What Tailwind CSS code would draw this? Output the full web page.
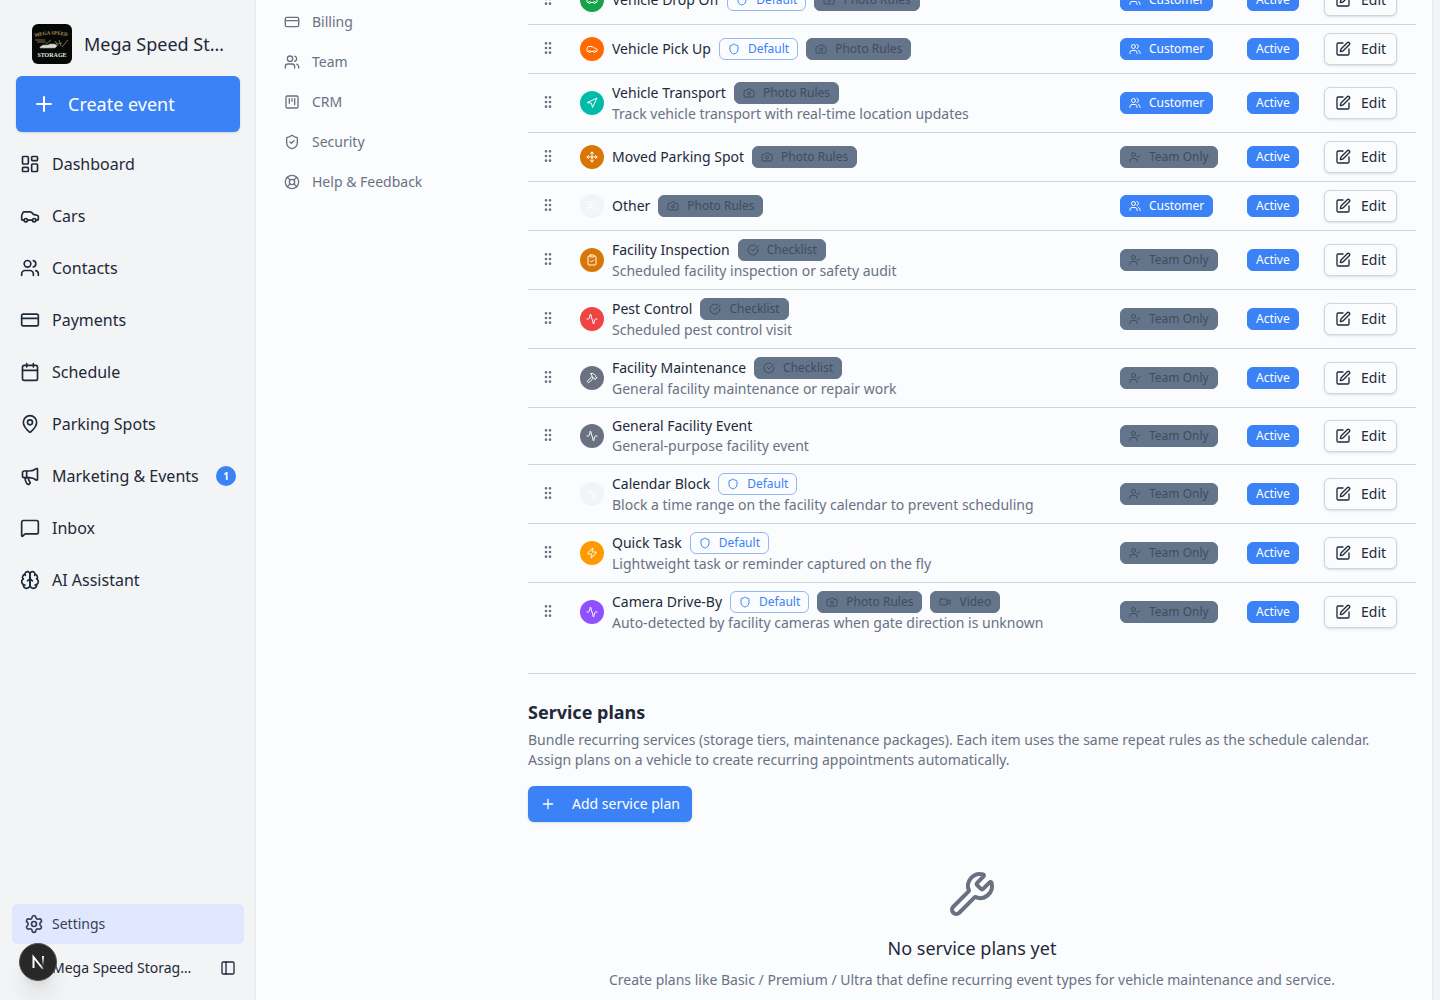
<!DOCTYPE html>
<html lang="en">
<head>
  <meta charset="UTF-8">
  <meta name="viewport" content="width=device-width, initial-scale=1.0">
  <title>Settings - Mega Speed Storage</title>
  <script src="https://cdn.jsdelivr.net/npm/@tailwindcss/browser@4"></script>
</head>
<body class="flex h-screen overflow-hidden bg-[#f3f4f6] font-['Noto_Sans',sans-serif] text-gray-800">

  <!-- Icon sprite -->
  <svg class="hidden">
    <symbol id="plus" viewBox="0 0 24 24"><path d="M5 12h14M12 5v14"/></symbol>
    <symbol id="dashboard" viewBox="0 0 24 24"><rect width="7" height="9" x="3" y="3" rx="1"/><rect width="7" height="5" x="14" y="3" rx="1"/><rect width="7" height="9" x="14" y="12" rx="1"/><rect width="7" height="5" x="3" y="16" rx="1"/></symbol>
    <symbol id="car" viewBox="0 0 24 24"><path d="M19 17h2c.6 0 1-.4 1-1v-3c0-.9-.7-1.7-1.5-1.9C18.7 10.6 16 10 16 10s-1.3-1.4-2.2-2.3c-.5-.4-1.1-.7-1.8-.7H5c-.6 0-1.1.4-1.4.9l-1.4 2.9A3.7 3.7 0 0 0 2 12v4c0 .6.4 1 1 1h2"/><circle cx="7" cy="17" r="2"/><path d="M9 17h6"/><circle cx="17" cy="17" r="2"/></symbol>
    <symbol id="users" viewBox="0 0 24 24"><path d="M16 21v-2a4 4 0 0 0-4-4H6a4 4 0 0 0-4 4v2"/><circle cx="9" cy="7" r="4"/><path d="M22 21v-2a4 4 0 0 0-3-3.87M16 3.13a4 4 0 0 1 0 7.75"/></symbol>
    <symbol id="user-check" viewBox="0 0 24 24"><path d="m16 11 2 2 4-4"/><path d="M16 21v-2a4 4 0 0 0-4-4H6a4 4 0 0 0-4 4v2"/><circle cx="9" cy="7" r="4"/></symbol>
    <symbol id="card" viewBox="0 0 24 24"><rect width="20" height="14" x="2" y="5" rx="2"/><path d="M2 10h20"/></symbol>
    <symbol id="calendar" viewBox="0 0 24 24"><path d="M8 2v4M16 2v4"/><rect width="18" height="18" x="3" y="4" rx="2"/><path d="M3 10h18"/></symbol>
    <symbol id="pin" viewBox="0 0 24 24"><path d="M20 10c0 4.993-5.539 10.193-7.399 11.799a1 1 0 0 1-1.202 0C9.539 20.193 4 14.993 4 10a8 8 0 0 1 16 0"/><circle cx="12" cy="10" r="3"/></symbol>
    <symbol id="megaphone" viewBox="0 0 24 24"><path d="M11 6a13 13 0 0 0 8.4-2.8A1 1 0 0 1 21 4v12a1 1 0 0 1-1.6.8A13 13 0 0 0 11 14H5a2 2 0 0 1-2-2V8a2 2 0 0 1 2-2z"/><path d="M6 14a12 12 0 0 0 2.4 7.2 2 2 0 0 0 3.2-2.4A8 8 0 0 1 10 14M8 6v8"/></symbol>
    <symbol id="message" viewBox="0 0 24 24"><path d="M22 17a2 2 0 0 1-2 2H6.828a2 2 0 0 0-1.414.586l-2.202 2.202A.71.71 0 0 1 2 21.286V5a2 2 0 0 1 2-2h16a2 2 0 0 1 2 2z"/></symbol>
    <symbol id="brain" viewBox="0 0 24 24"><path d="M12 5a3 3 0 1 0-5.997.125 4 4 0 0 0-2.526 5.77 4 4 0 0 0 .556 6.588A4 4 0 1 0 12 18Z"/><path d="M12 5a3 3 0 1 1 5.997.125 4 4 0 0 1 2.526 5.77 4 4 0 0 1-.556 6.588A4 4 0 1 1 12 18Z"/><path d="M15 13a4.5 4.5 0 0 1-3-4 4.5 4.5 0 0 1-3 4M17.599 6.5a3 3 0 0 0 .399-1.375M6.003 5.125A3 3 0 0 0 6.401 6.5M3.477 10.896a4 4 0 0 1 .585-.396M19.938 10.5a4 4 0 0 1 .585.396M6 18a4 4 0 0 1-1.967-.516M19.967 17.484A4 4 0 0 1 18 18"/></symbol>
    <symbol id="settings" viewBox="0 0 24 24"><path d="M9.671 4.136a2.34 2.34 0 0 1 4.659 0 2.34 2.34 0 0 0 3.319 1.915 2.34 2.34 0 0 1 2.33 4.033 2.34 2.34 0 0 0 0 3.831 2.34 2.34 0 0 1-2.33 4.033 2.34 2.34 0 0 0-3.319 1.915 2.34 2.34 0 0 1-4.659 0 2.34 2.34 0 0 0-3.32-1.915 2.34 2.34 0 0 1-2.33-4.033 2.34 2.34 0 0 0 0-3.831A2.34 2.34 0 0 1 6.35 6.051a2.34 2.34 0 0 0 3.319-1.915"/><circle cx="12" cy="12" r="3"/></symbol>
    <symbol id="panel" viewBox="0 0 24 24"><rect width="18" height="18" x="3" y="3" rx="2"/><path d="M9 3v18"/></symbol>
    <symbol id="kanban" viewBox="0 0 24 24"><rect width="18" height="18" x="3" y="3" rx="2"/><path d="M8 7v7M12 7v4M16 7v9"/></symbol>
    <symbol id="shield" viewBox="0 0 24 24"><path d="M20 13c0 5-3.5 7.5-7.66 8.95a1 1 0 0 1-.67-.01C7.5 20.5 4 18 4 13V6a1 1 0 0 1 1-1c2 0 4.5-1.2 6.24-2.72a1.17 1.17 0 0 1 1.52 0C14.51 3.81 17 5 19 5a1 1 0 0 1 1 1z"/></symbol>
    <symbol id="shield-check" viewBox="0 0 24 24"><path d="M20 13c0 5-3.5 7.5-7.66 8.95a1 1 0 0 1-.67-.01C7.5 20.5 4 18 4 13V6a1 1 0 0 1 1-1c2 0 4.5-1.2 6.24-2.72a1.17 1.17 0 0 1 1.52 0C14.51 3.81 17 5 19 5a1 1 0 0 1 1 1z"/><path d="m9 12 2 2 4-4"/></symbol>
    <symbol id="life-buoy" viewBox="0 0 24 24"><circle cx="12" cy="12" r="10"/><path d="m4.93 4.93 4.24 4.24M14.83 9.17l4.24-4.24M14.83 14.83l4.24 4.24M9.17 14.83l-4.24 4.24"/><circle cx="12" cy="12" r="4"/></symbol>
    <symbol id="camera" viewBox="0 0 24 24"><path d="M14.5 4h-5L7 7H4a2 2 0 0 0-2 2v9a2 2 0 0 0 2 2h16a2 2 0 0 0 2-2V9a2 2 0 0 0-2-2h-3z"/><circle cx="12" cy="13" r="3"/></symbol>
    <symbol id="check" viewBox="0 0 24 24"><path d="M21.801 10A10 10 0 1 1 17 3.335"/><path d="m9 11 3 3L22 4"/></symbol>
    <symbol id="video" viewBox="0 0 24 24"><path d="m16 13 5.223 3.482a.5.5 0 0 0 .777-.416V7.87a.5.5 0 0 0-.752-.432L16 10.5"/><rect x="2" y="6" width="14" height="12" rx="2"/></symbol>
    <symbol id="navigation" viewBox="0 0 24 24"><path d="m3 11 19-9-9 19-2-8z"/></symbol>
    <symbol id="move" viewBox="0 0 24 24"><path d="M12 2v20M2 12h20M15 19l-3 3-3-3M19 9l3 3-3 3M5 9l-3 3 3 3M9 5l3-3 3 3"/></symbol>
    <symbol id="clipboard" viewBox="0 0 24 24"><rect width="8" height="4" x="8" y="2" rx="1"/><path d="M16 4h2a2 2 0 0 1 2 2v14a2 2 0 0 1-2 2H6a2 2 0 0 1-2-2V6a2 2 0 0 1 2-2h2"/><path d="m9 14 2 2 4-4"/></symbol>
    <symbol id="activity" viewBox="0 0 24 24"><path d="M22 12h-2.48a2 2 0 0 0-1.93 1.46l-2.35 8.36a.25.25 0 0 1-.48 0L9.24 2.18a.25.25 0 0 0-.48 0l-2.35 8.36A2 2 0 0 1 4.49 12H2"/></symbol>
    <symbol id="hammer" viewBox="0 0 24 24"><path d="m15 12-8.373 8.373a1 1 0 1 1-3-3L12 9M18 15l4-4"/><path d="m21.5 11.5-1.914-1.914A2 2 0 0 1 19 8.172V7l-2.26-2.26a6 6 0 0 0-4.202-1.756L9 2.96l.92.82A6.18 6.18 0 0 1 12 8.4V10l2 2h1.172a2 2 0 0 1 1.414.586L18.5 14.5"/></symbol>
    <symbol id="zap" viewBox="0 0 24 24"><path d="M4 14a1 1 0 0 1-.78-1.63l9.9-10.2a.5.5 0 0 1 .86.46l-1.92 6.02A1 1 0 0 0 13 10h7a1 1 0 0 1 .78 1.63l-9.9 10.2a.5.5 0 0 1-.86-.46l1.92-6.02A1 1 0 0 0 11 14z"/></symbol>
    <symbol id="edit" viewBox="0 0 24 24"><path d="M12 3H5a2 2 0 0 0-2 2v14a2 2 0 0 0 2 2h14a2 2 0 0 0 2-2v-7"/><path d="M18.375 2.625a1 1 0 0 1 3 3l-9.013 9.014a2 2 0 0 1-.853.505l-2.873.84a.5.5 0 0 1-.62-.62l.84-2.873a2 2 0 0 1 .506-.852z"/></symbol>
    <symbol id="grip" viewBox="0 0 24 24"><circle cx="9" cy="5" r="1"/><circle cx="9" cy="12" r="1"/><circle cx="9" cy="19" r="1"/><circle cx="15" cy="5" r="1"/><circle cx="15" cy="12" r="1"/><circle cx="15" cy="19" r="1"/></symbol>
    <symbol id="wrench" viewBox="0 0 24 24"><path d="M14.7 6.3a1 1 0 0 0 0 1.4l1.6 1.6a1 1 0 0 0 1.4 0l3.106-3.105c.32-.322.863-.22.983.218a6 6 0 0 1-8.259 7.057l-7.91 7.91a1 1 0 0 1-2.999-3l7.91-7.91a6 6 0 0 1 7.057-8.259c.438.12.54.662.219.984z"/></symbol>
  </svg>

  <!-- Sidebar -->
  <aside class="flex w-64 shrink-0 flex-col">
    <div class="flex items-center gap-3 px-8 pt-6 pb-3">
      <svg class="size-10 shrink-0 rounded-md" viewBox="0 0 40 40" role="img" aria-label="Mega Speed Storage logo">
        <rect width="40" height="40" fill="#060806"/>
        <path id="logo-arc" d="M3 13Q20 8 39 13" fill="none"/>
        <text font-family="Liberation Serif" font-weight="bold" font-size="5" fill="#b3955c"><textPath href="#logo-arc">MEGA SPEED</textPath></text>
        <path d="M3 16h10M5 18h9M14 20l5-4M23 17l3 5M27 16l2 6M36 16l-6 7" stroke="#7d6b48" stroke-width="1" fill="none"/>
        <path d="M8 23l3-2h5l2-1h5l2 2-2 2H8zM24 20l6-1" fill="#d8d8d2" stroke="#9a9a90" stroke-width=".6"/>
        <text x="20" y="33" text-anchor="middle" font-family="Liberation Serif" font-weight="bold" font-size="6" fill="#e5e7e2">STORAGE</text>
      </svg>
      <span class="truncate text-lg">Mega Speed Storage</span>
    </div>
    <div class="px-4">
      <button class="flex h-14 w-full items-center gap-3 rounded-md bg-[#3b82f6] px-4 text-lg text-white shadow-sm">
        <svg class="size-6 fill-none stroke-current stroke-2" stroke-linecap="round"><use href="#plus"/></svg>
        Create event
      </button>
    </div>
    <nav id="mainNav" class="flex flex-col gap-1 px-3 pt-2"></nav>

    <div class="mt-auto flex flex-col gap-1 px-3 pb-3">
      <a href="#" class="flex h-10 items-center gap-2 rounded-md bg-[#e0e7ff] px-3 text-sm text-gray-700">
        <svg class="size-5 fill-none stroke-current stroke-2" stroke-linecap="round" stroke-linejoin="round"><use href="#settings"/></svg>
        Settings
      </a>
      <div class="relative flex h-10 items-center pr-2 pl-10 text-sm">
        <span class="w-36 truncate">Mega Speed Storage Team</span>
        <button class="ml-auto" aria-label="Toggle sidebar">
          <svg class="size-4 fill-none stroke-current stroke-2" stroke-linecap="round" stroke-linejoin="round"><use href="#panel"/></svg>
        </button>
        <!-- Dev tools badge floats over the account row -->
        <button class="absolute -top-[5px] left-[7px] flex size-[38px] items-center justify-center rounded-full border border-neutral-600 bg-[#282828] shadow-xl" aria-label="Open Next.js Dev Tools">
          <svg class="size-10 shrink-0 fill-none" viewBox="0 0 40 40">
            <defs>
              <linearGradient id="n1" gradientUnits="userSpaceOnUse" x1="20" y1="20" x2="27" y2="29"><stop offset=".4" stop-color="#fff"/><stop offset="1" stop-color="#fff" stop-opacity="0"/></linearGradient>
              <linearGradient id="n2" gradientUnits="userSpaceOnUse" x1="0" y1="14" x2="0" y2="24"><stop stop-color="#fff"/><stop offset="1" stop-color="#fff" stop-opacity="0"/></linearGradient>
            </defs>
            <path d="M15.5 26V15l9.500 12" stroke="url(#n1)" stroke-width="2"/>
            <path d="M25 14v10" stroke="url(#n2)" stroke-width="2"/>
          </svg>
        </button>
      </div>
    </div>
  </aside>

  <!-- Page -->
  <main class="mr-2 flex min-w-0 flex-1 gap-8 overflow-hidden bg-[#fafcfe] px-4 shadow">
    <nav id="settingsNav" class="flex w-56 shrink-0 flex-col text-sm text-gray-500"></nav>

    <div class="min-w-0 flex-1">
      <table class="-mt-6 w-full text-left text-sm">
        <colgroup>
          <col class="w-11">
          <col>
          <col class="w-[127px]">
          <col class="w-[77px]">
          <col class="w-[100px]">
        </colgroup>
        <tbody id="eventTypes" class="divide-y divide-gray-300"></tbody>
      </table>

      <section class="mt-8 border-t border-gray-300 pt-6">
        <h2 class="text-lg font-bold">Service plans</h2>
        <p class="mt-1 text-sm text-gray-500">Bundle recurring services (storage tiers, maintenance packages). Each item uses the same repeat rules as the schedule calendar. Assign plans on a vehicle to create recurring appointments automatically.</p>
        <button class="mt-4 flex h-9 items-center gap-4 rounded-md bg-[#3b82f6] px-3 text-sm text-white shadow-sm">
          <svg class="size-4 fill-none stroke-current stroke-2" stroke-linecap="round"><use href="#plus"/></svg>
          Add service plan
        </button>
        <div class="flex flex-col items-center pt-12 text-center">
          <svg class="size-12 fill-none stroke-gray-500 stroke-2" stroke-linecap="round" stroke-linejoin="round"><use href="#wrench"/></svg>
          <h3 class="mt-4 text-lg">No service plans yet</h3>
          <p class="mt-2 text-sm text-gray-500">Create plans like Basic / Premium / Ultra that define recurring event types for vehicle maintenance and service.</p>
        </div>
      </section>
    </div>
  </main>

  <script>
    const icon = (name, cls) =>
      `<svg class="shrink-0 fill-none stroke-current stroke-2 ${cls}" stroke-linecap="round" stroke-linejoin="round"><use href="#${name}"/></svg>`;

    const mainNav = [
      ['dashboard', 'Dashboard'],
      ['car', 'Cars'],
      ['users', 'Contacts'],
      ['card', 'Payments'],
      ['calendar', 'Schedule'],
      ['pin', 'Parking Spots'],
      ['megaphone', 'Marketing & Events', 1],
      ['message', 'Inbox'],
      ['brain', 'AI Assistant'],
    ];

    document.getElementById('mainNav').innerHTML = mainNav.map(([name, label, count]) => `
      <a href="#" class="flex h-12 items-center gap-3 px-2">
        ${icon(name, 'size-5')}
        <span>${label.replace('&', '&amp;')}</span>
        ${count ? `<span class="ml-auto flex size-5 items-center justify-center rounded-full bg-[#3b82f6] text-[10px] font-bold text-white">${count}</span>` : ''}
      </a>`).join('');

    const settingsNav = [
      ['card', 'Billing'],
      ['users', 'Team'],
      ['kanban', 'CRM'],
      ['shield-check', 'Security'],
      ['life-buoy', 'Help & Feedback'],
    ];

    document.getElementById('settingsNav').innerHTML = '<div class="h-0.5"></div>' + settingsNav.map(([name, label]) => `
      <a href="#" class="flex h-10 items-center gap-3 px-3">
        ${icon(name, 'size-4')}
        <span>${label.replace('&', '&amp;')}</span>
      </a>`).join('');

    const badgeStyles = {
      outline: 'border-[#93b8f5] text-[#3b82f6]',
      blue: 'border-[#3b82f6] bg-[#3b82f6] text-white',
      slate: 'border-[#64748b] bg-[#64748b] text-[#414c5c]',
    };

    const badge = (style, label, name) =>
      `<span class="inline-flex items-center gap-2 rounded-md border px-2 py-0.5 text-xs whitespace-nowrap ${badgeStyles[style]}">${name ? icon(name, 'size-3') : ''}${label}</span>`;

    const tags = {
      default: badge('outline', 'Default', 'shield'),
      photo: badge('slate', 'Photo Rules', 'camera'),
      checklist: badge('slate', 'Checklist', 'check'),
      video: badge('slate', 'Video', 'video'),
    };

    const eventTypes = [
      { name: 'Vehicle Drop Off', icon: 'car', color: 'bg-[#16a34a]', tags: ['default', 'photo'], customer: true },
      { name: 'Vehicle Pick Up', icon: 'car', color: 'bg-[#ff6900]', tags: ['default', 'photo'], customer: true },
      { name: 'Vehicle Transport', icon: 'navigation', color: 'bg-[#00bba7]', tags: ['photo'], customer: true, text: 'Track vehicle transport with real-time location updates' },
      { name: 'Moved Parking Spot', icon: 'move', color: 'bg-[#d97706]', tags: ['photo'] },
      { name: 'Other', icon: 'users', color: 'bg-gray-100', tags: ['photo'], customer: true },
      { name: 'Facility Inspection', icon: 'clipboard', color: 'bg-[#d97706]', tags: ['checklist'], text: 'Scheduled facility inspection or safety audit' },
      { name: 'Pest Control', icon: 'activity', color: 'bg-[#ef4444]', tags: ['checklist'], text: 'Scheduled pest control visit' },
      { name: 'Facility Maintenance', icon: 'hammer', color: 'bg-gray-500', tags: ['checklist'], text: 'General facility maintenance or repair work' },
      { name: 'General Facility Event', icon: 'activity', color: 'bg-gray-500', tags: [], text: 'General-purpose facility event' },
      { name: 'Calendar Block', icon: 'activity', color: 'bg-gray-100', tags: ['default'], text: 'Block a time range on the facility calendar to prevent scheduling' },
      { name: 'Quick Task', icon: 'zap', color: 'bg-[#fe9a00]', tags: ['default'], text: 'Lightweight task or reminder captured on the fly' },
      { name: 'Camera Drive-By', icon: 'activity', color: 'bg-[#8e51ff]', tags: ['default', 'photo', 'video'], text: 'Auto-detected by facility cameras when gate direction is unknown' },
    ];

    document.getElementById('eventTypes').innerHTML = eventTypes.map(e => `
      <tr>
        <td class="px-2 pb-0.5">
          <button class="flex p-1 text-gray-500" aria-label="Reorder ${e.name}">${icon('grip', 'size-4')}</button>
        </td>
        <td class="p-2">
          <div class="flex items-center gap-2">
            <span class="flex size-6 shrink-0 items-center justify-center rounded-full text-white ${e.color}">${icon(e.icon, 'size-3')}</span>
            <div>
              <div class="flex items-center gap-2"><span>${e.name}</span>${e.tags.map(t => tags[t]).join('')}</div>
              ${e.text ? `<p class="text-gray-500">${e.text}</p>` : ''}
            </div>
          </div>
        </td>
        <td class="p-2"><div class="flex">${e.customer ? badge('blue', 'Customer', 'users') : badge('slate', 'Team Only', 'user-check')}</div></td>
        <td class="p-2"><div class="flex">${badge('blue', 'Active')}</div></td>
        <td class="p-2">
          <button class="flex h-8 items-center gap-2.5 rounded-md border border-gray-300 bg-[#fafcfe] px-2.5 shadow-sm">${icon('edit', 'size-4')}Edit</button>
        </td>
      </tr>`).join('');
  </script>

</body>
</html>
